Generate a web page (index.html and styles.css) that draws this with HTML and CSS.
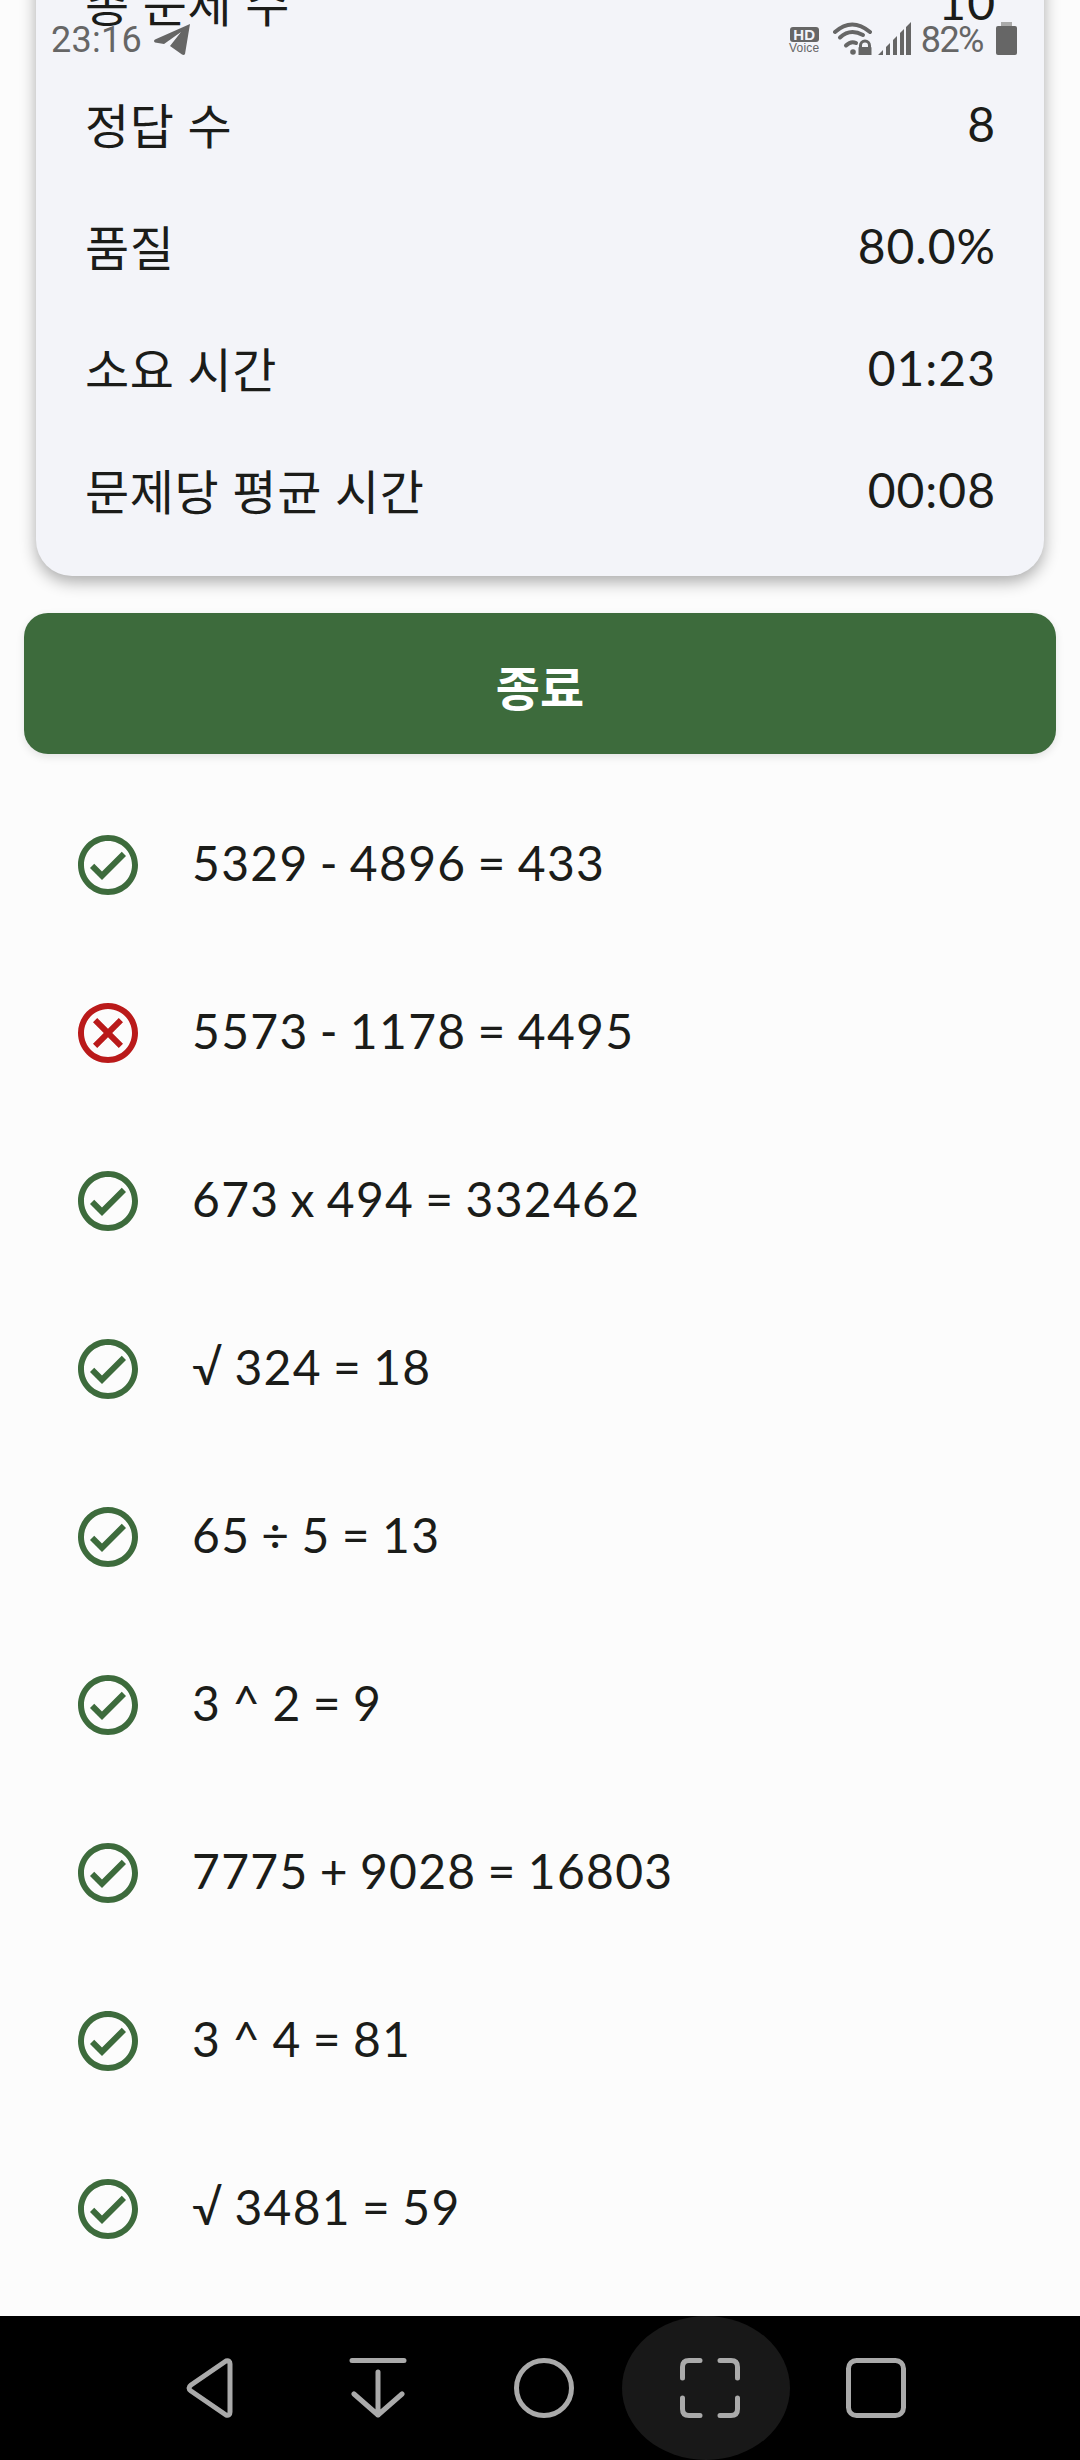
FILE: index.html
```html
<!DOCTYPE html>
<html lang="ko">
<head>
<meta charset="utf-8">
<title>결과</title>
<link rel="stylesheet" href="styles.css">
</head>
<body>
<svg class="defs" width="0" height="0" aria-hidden="true">
  <symbol id="ok" viewBox="0 0 24 24">
    <path d="M12 2C6.48 2 2 6.48 2 12s4.48 10 10 10 10-4.48 10-10S17.52 2 12 2zm0 18c-4.41 0-8-3.59-8-8s3.59-8 8-8 8 3.59 8 8-3.59 8-8 8zm4.59-12.42L10 14.17l-2.59-2.58L6 13l4 4 8-8z"/>
  </symbol>
  <symbol id="bad" viewBox="0 0 24 24">
    <path d="M15.59 7L12 10.59 8.41 7 7 8.41 10.59 12 7 15.59 8.41 17 12 13.41 15.59 17 17 15.59 13.41 12 17 8.41 15.59 7zM12 2C6.47 2 2 6.47 2 12s4.47 10 10 10 10-4.47 10-10S17.53 2 12 2zm0 18c-4.41 0-8-3.59-8-8s3.59-8 8-8 8 3.59 8 8-3.59 8-8 8z"/>
  </symbol>
</svg>

<div class="screen">
  <header class="status">
    <div class="status-left">
      <span class="clock">23:16</span>
      <svg class="plane" viewBox="0 0 36 31"><path d="M36 0 L31 30 Q30 31.5 28 30.5 L16 22 L27 8 L10 20 L1 18.5 Q-1 17 1 15.500 Z"/></svg>
    </div>
    <div class="status-right">
      <span class="hd"><b class="hd-top">HD</b><span class="hd-sub">Voice</span></span>
      <svg class="wifi" viewBox="0 0 39 33">
        <path class="arc" d="M2 10 Q19 -5 37 10"/>
        <path class="arc" d="M7 15.500 Q17 6 30 13"/>
        <path class="arc" d="M13 23.500 Q18 18.500 23 21"/>
        <circle cx="20" cy="30" r="2.800"/>
        <path d="M26 25 V23.500 a6 6 0 0 1 12 0 V25 Q38.500 25 38.500 26 V33 H25.500 V26 Q25.500 25 26 25 Z M29 25 h6 v-1.500 a3 3 0 0 0 -6 0 Z" fill-rule="evenodd"/>
      </svg>
      <svg class="signal" viewBox="0 0 33 33">
        <path d="M0 33 L5 28 V33 Z M8 33 V25 L12 21 V33 Z M15 33 V18 L19 14 V33 Z M22 33 V11 L26 7 V33 Z M28 33 V5 L33 0 V33 Z"/>
      </svg>
      <span class="level">82%</span>
      <svg class="battery" viewBox="0 0 21 33">
        <path class="cap" d="M5 0 H16 V4 H5 Z"/>
        <path d="M2 4 H19 Q21 4 21 6 V31 Q21 33 19 33 H2 Q0 33 0 31 V6 Q0 4 2 4 Z"/>
      </svg>
    </div>
  </header>

  <main class="content">
    <section class="card">
      <div class="stat"><span class="stat-label">총 문제 수</span><span class="stat-value">10</span></div>
      <div class="stat"><span class="stat-label">정답 수</span><span class="stat-value">8</span></div>
      <div class="stat"><span class="stat-label">품질</span><span class="stat-value">80.0%</span></div>
      <div class="stat"><span class="stat-label">소요 시간</span><span class="stat-value">01:23</span></div>
      <div class="stat"><span class="stat-label">문제당 평균 시간</span><span class="stat-value">00:08</span></div>
    </section>

    <button class="finish" type="button">종료</button>

    <ul class="answers">
      <li class="answer"><svg class="mark mark-ok"><use href="#ok"/></svg><span class="sum">5329 - 4896 = 433</span></li>
      <li class="answer"><svg class="mark mark-bad"><use href="#bad"/></svg><span class="sum">5573 - 1178 = 4495</span></li>
      <li class="answer"><svg class="mark mark-ok"><use href="#ok"/></svg><span class="sum">673 x 494 = 332462</span></li>
      <li class="answer"><svg class="mark mark-ok"><use href="#ok"/></svg><span class="sum">√ 324 = 18</span></li>
      <li class="answer"><svg class="mark mark-ok"><use href="#ok"/></svg><span class="sum">65 ÷ 5 = 13</span></li>
      <li class="answer"><svg class="mark mark-ok"><use href="#ok"/></svg><span class="sum">3 ^ 2 = 9</span></li>
      <li class="answer"><svg class="mark mark-ok"><use href="#ok"/></svg><span class="sum">7775 + 9028 = 16803</span></li>
      <li class="answer"><svg class="mark mark-ok"><use href="#ok"/></svg><span class="sum">3 ^ 4 = 81</span></li>
      <li class="answer"><svg class="mark mark-ok"><use href="#ok"/></svg><span class="sum">√ 3481 = 59</span></li>
    </ul>
  </main>

  <nav class="navbar">
    <div class="nav-slot">
      <svg class="nav-icon" viewBox="0 0 60 60"><path d="M13 27 L48 3 Q52 2 52 6 V54 Q52 58 48 57 L13 33 Q9 30 13 27 Z" transform="translate(-4 0)"/></svg>
    </div>
    <div class="nav-slot">
      <svg class="nav-icon" viewBox="0 0 60 60"><path d="M4 2.500 H56 M30 14 V57 M6 36 L30 57 L54 36"/></svg>
    </div>
    <div class="nav-slot">
      <svg class="nav-icon" viewBox="0 0 60 60"><circle cx="30" cy="30" r="27.500"/></svg>
    </div>
    <div class="nav-slot nav-slot-active">
      <svg class="nav-icon" viewBox="0 0 60 60"><path d="M2.500 20 V9 Q2.500 2.500 9 2.500 H20 M40 2.500 H51 Q57.500 2.500 57.500 9 V20 M2.500 40 V51 Q2.500 57.500 9 57.500 H20 M40 57.500 H51 Q57.500 57.500 57.500 51 V40"/></svg>
    </div>
    <div class="nav-slot">
      <svg class="nav-icon" viewBox="0 0 60 60"><rect x="2.500" y="2.500" width="55" height="55" rx="8"/></svg>
    </div>
  </nav>
</div>
</body>
</html>
```
FILE: styles.css
```css
* { box-sizing: border-box; }

html, body {
  margin: 0;
  padding: 0;
}

body {
  width: 1080px;
  height: 2460px;
  overflow: hidden;
  background: #fcfcfc;
  color: #1b1c19;
  font-family: Lato, "Noto Sans CJK KR", sans-serif;
}

.defs { position: absolute; }

.screen {
  position: relative;
  display: flex;
  flex-direction: column;
  height: 2460px;
}

/* Status bar floats over the scrolled content */
.status {
  position: absolute;
  top: 21px;
  left: 51px;
  right: 63px;
  z-index: 2;
  display: flex;
  justify-content: space-between;
  height: 34px;
  color: #666;
  fill: #666;
}

.status-left,
.status-right {
  display: flex;
  align-items: center;
}

.clock {
  margin-top: 4px;
  font: 36px/34px Roboto, sans-serif;
  letter-spacing: 0.3px;
}

.plane {
  width: 36px;
  height: 31px;
  margin: 3px 0 0 12px;
}

.hd {
  display: flex;
  flex-direction: column;
  align-items: center;
  width: 29px;
  margin: 6px 14px 0 0;
}

.hd-top {
  width: 29px;
  height: 15px;
  border-radius: 3px;
  background: #666;
  color: #f3f4f9;
  font: bold 15px/15px "Liberation Sans", sans-serif;
  text-align: center;
}

.hd-sub {
  font: 12px/13px "Liberation Sans", sans-serif;
  letter-spacing: 0.2px;
}

.wifi {
  width: 39px;
  height: 33px;
  margin-right: 6px;
}

.wifi .arc {
  fill: none;
  stroke: #666;
  stroke-width: 4;
  stroke-linecap: round;
}

.signal {
  width: 33px;
  height: 33px;
  margin-right: 10px;
}

.level {
  margin-top: 4px;
  margin-right: 13px;
  font: 36px/34px Roboto, sans-serif;
  letter-spacing: -1.5px;
}

.battery {
  width: 21px;
  height: 33px;
}

.battery .cap { fill: #aaa; }

.content {
  flex: 1;
  min-height: 0;
  overflow: hidden;
  display: flex;
  flex-direction: column;
}

/* Summary card, partly scrolled past the top edge */
.card {
  flex: none;
  margin: -58px 36px 0;
  padding-bottom: 24px;
  padding-left: 49px;
  padding-right: 48px;
  background: #f3f4f9;
  border-radius: 0 0 36px 36px;
  box-shadow: 0 6px 16px rgba(0, 0, 0, 0.32);
}

.stat {
  display: flex;
  align-items: center;
  justify-content: space-between;
  height: 122px;
  font-size: 48px;
}

.stat-label {
  margin-bottom: 4px;
  letter-spacing: 0.65px;
}

.stat-value {
  margin-bottom: 3px;
  letter-spacing: 1px;
}

.finish {
  flex: none;
  display: block;
  height: 141px;
  margin: 37px 24px 0;
  padding: 3px 0 0;
  border: 0;
  border-radius: 24px;
  background: #3d6b3c;
  color: #fff;
  font: bold 48px "Noto Sans CJK KR", sans-serif;
  box-shadow: 0 3px 8px rgba(0, 0, 0, 0.1);
}

.answers {
  list-style: none;
  margin: 27px 0 0;
  padding: 0;
}

.answer {
  display: flex;
  align-items: center;
  height: 168px;
  padding-left: 72px;
  gap: 48px;
  font-size: 48px;
}

.sum {
  margin-bottom: 5px;
  letter-spacing: 1.3px;
  word-spacing: -2.5px;
}

.mark {
  flex: none;
  width: 72px;
  height: 72px;
}

.mark-ok { fill: #3d6b3c; }
.mark-bad { fill: #ba1a1a; }

/* Three-button system navigation */
.navbar {
  flex: none;
  display: flex;
  align-items: center;
  height: 144px;
  padding-left: 129px;
  background: #000;
}

.nav-slot {
  position: relative;
  display: flex;
  align-items: center;
  justify-content: center;
  width: 166px;
  height: 144px;
}

.nav-slot-active::before {
  content: "";
  position: absolute;
  top: 0;
  left: -5px;
  width: 168px;
  height: 144px;
  border-radius: 50%;
  background: #181818;
}

.nav-icon {
  position: relative;
  width: 60px;
  height: 60px;
  fill: none;
  stroke: #aaa;
  stroke-width: 5;
  stroke-linecap: round;
  stroke-linejoin: round;
}
```
